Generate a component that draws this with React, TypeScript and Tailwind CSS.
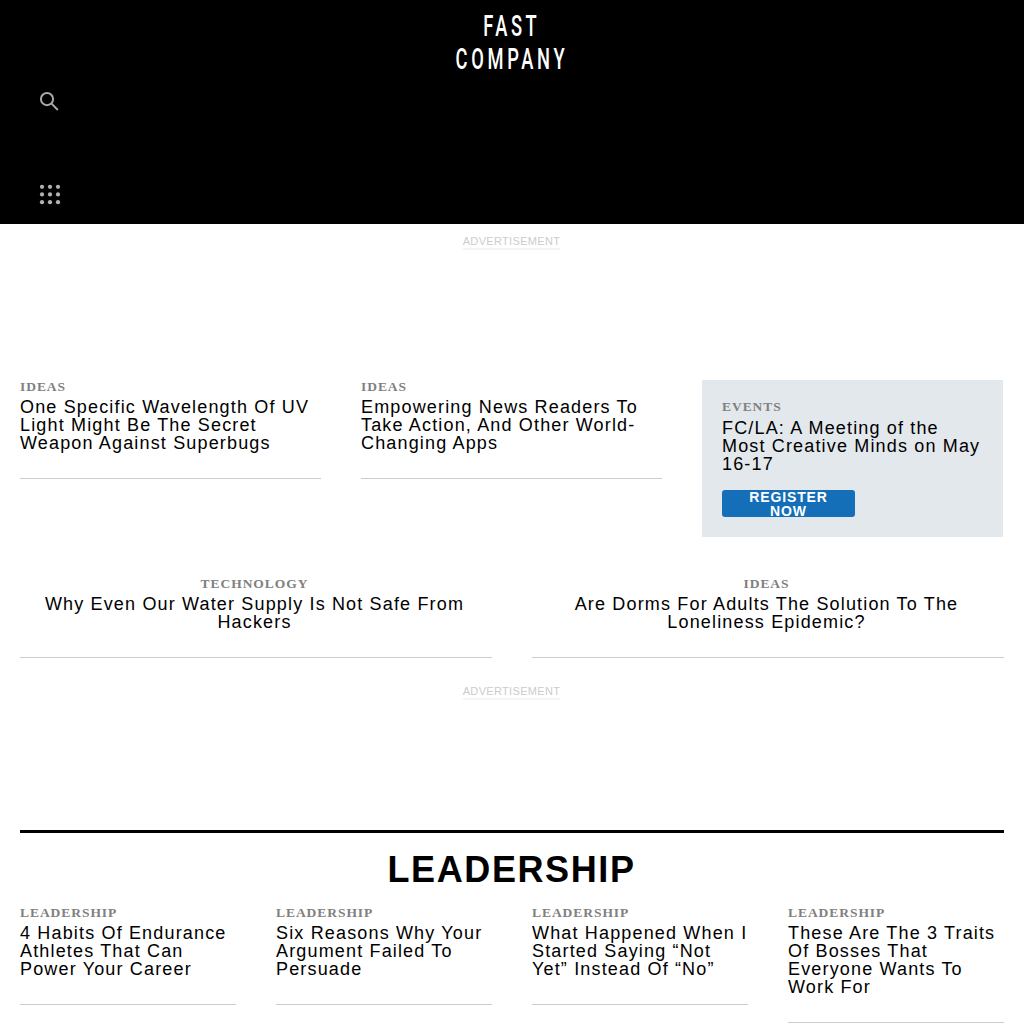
type Story = { category: string; title: string };

const pair: Story[] = [
  { category: "IDEAS", title: "One Specific Wavelength Of UV Light Might Be The Secret Weapon Against Superbugs" },
  { category: "IDEAS", title: "Empowering News Readers To Take Action, And Other World-Changing Apps" },
];
const wide: Story[] = [
  { category: "TECHNOLOGY", title: "Why Even Our Water Supply Is Not Safe From Hackers" },
  { category: "IDEAS", title: "Are Dorms For Adults The Solution To The Loneliness Epidemic?" },
];
const leadership: Story[] = [
  { category: "LEADERSHIP", title: "4 Habits Of Endurance Athletes That Can Power Your Career" },
  { category: "LEADERSHIP", title: "Six Reasons Why Your Argument Failed To Persuade" },
  { category: "LEADERSHIP", title: "What Happened When I Started Saying “Not Yet” Instead Of “No”" },
  { category: "LEADERSHIP", title: "These Are The 3 Traits Of Bosses That Everyone Wants To Work For" },
];

function Category({ children }: { children: string }) {
  return (
    <div className="mb-[5px] h-[13px] font-['Liberation_Serif',serif] text-[13.5px] leading-[13px] font-bold tracking-[0.95px] text-[#808080]">
      {children}
    </div>
  );
}

function Headline({ children }: { children: string }) {
  return <h2 className="text-[18px] leading-[18px] tracking-[1.16px] text-black">{children}</h2>;
}

function Card({ story, centered = false }: { story: Story; centered?: boolean }) {
  return (
    <article className={centered ? "border-b border-[#cccccc] pr-[3px] pb-[26px] text-center" : "border-b border-[#cccccc] pb-[26px]"}>
      <Category>{story.category}</Category>
      <Headline>{story.title}</Headline>
    </article>
  );
}

function Advertisement() {
  return (
    <div className="flex justify-center pr-px">
      <span className="border-b-2 border-[#f4f4f4] text-[11px] leading-[13px] tracking-[0.33px] text-[#cccccc]">
        ADVERTISEMENT
      </span>
    </div>
  );
}

function Logo() {
  return (
    <svg
      className="mx-auto block overflow-visible"
      width="120"
      height="64"
      viewBox="0 0 120 64"
      fill="#fff"
      fontFamily="Roboto, sans-serif"
      fontSize="29.5"
      fontWeight="500"
    >
      <text transform="translate(31.3 26) scale(.62 1)" textLength="86" lengthAdjust="spacing">FAST</text>
      <text transform="translate(3.6 59) scale(.62 1)" textLength="176" lengthAdjust="spacing">COMPANY</text>
    </svg>
  );
}

export default function App() {
  return (
    <div className="h-[1024px] w-[1024px] overflow-hidden bg-white font-['Liberation_Sans',Arial,sans-serif]">
      <header className="flex h-[224px] flex-col bg-black pt-[10px]">
        <Logo />
        <svg className="mt-[17px] ml-[39px]" width="22" height="22" viewBox="0 0 22 22" fill="none" stroke="#a8a8a8" strokeWidth="2">
          <circle cx="8" cy="8.1" r="6.1" />
          <path d="M12.3 12.4 18.8 19" />
        </svg>
        <svg className="mt-[71px] ml-[39px]" width="22" height="22" viewBox="0 0 22 22" fill="#b3b3b3">
          {[2.8, 10.4, 18.2].map((y) => [3, 11, 19].map((x) => <circle key={`${x}-${y}`} cx={x} cy={y} r="2.1" />))}
        </svg>
      </header>
      <main className="px-5">
        <div className="h-[156px] pt-[11px]">
          <Advertisement />
        </div>
        <section className="grid grid-cols-[301px_301px_301px] items-start gap-10">
          {pair.map((s) => (
            <Card key={s.title} story={s} />
          ))}
          <aside className="h-[157px] bg-[#e3e8ec] p-5">
            <div className="mb-[6px]">
              <Category>EVENTS</Category>
            </div>
            <Headline>FC/LA: A Meeting of the Most Creative Minds on May 16-17</Headline>
            <button className="mt-[17px] block h-[27px] w-[133px] rounded-[3px] bg-[#146fb8] px-5 text-[14px] leading-[14px] font-bold tracking-[0.85px] text-white">
              REGISTER NOW
            </button>
          </aside>
        </section>
        <section className="mt-10 grid grid-cols-2 gap-10">
          {wide.map((s) => (
            <Card key={s.title} story={s} centered />
          ))}
        </section>
        <div className="h-[172px] pt-[27px]">
          <Advertisement />
        </div>
        <section className="border-t-[3px] border-black">
          <h1 className="h-[54px] pt-[19px] pr-px text-center text-[36px] leading-[36px] font-bold tracking-[1.6px] text-black">
            LEADERSHIP
          </h1>
          <div className="mt-[19px] grid grid-cols-4 items-start gap-10">
            {leadership.map((s) => (
              <Card key={s.title} story={s} />
            ))}
          </div>
        </section>
      </main>
    </div>
  );
}
